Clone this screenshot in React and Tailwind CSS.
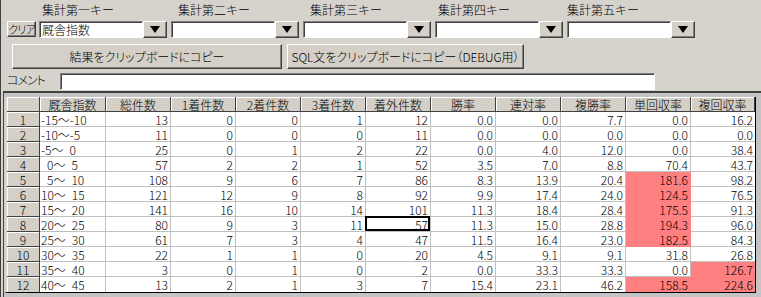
import React from "react";

const raised =
  "bg-[#d4d0c8] border border-t-white border-l-white border-b-[#404040] border-r-[#404040] shadow-[inset_-1px_-1px_0_#808080]";
const sunken =
  "bg-white border border-t-[#808080] border-l-[#808080] border-b-white border-r-white shadow-[inset_1px_1px_0_#404040]";

const headers = ["", "厩舎指数", "総件数", "1着件数", "2着件数", "3着件数", "着外件数", "勝率", "連対率", "複勝率", "単回収率", "複回収率"];

const S = "\u2002";
const rows = [
  ["-15～-10", 13, 0, 0, 1, 12, "0.0", "0.0", "7.7", "0.0", "16.2"],
  ["-10～-5", 11, 0, 0, 0, 11, "0.0", "0.0", "0.0", "0.0", "0.0"],
  [`-5～${S}0`, 25, 0, 1, 2, 22, "0.0", "4.0", "12.0", "0.0", "38.4"],
  [`${S}0～${S}5`, 57, 2, 2, 1, 52, "3.5", "7.0", "8.8", "70.4", "43.7"],
  [`${S}5～${S}10`, 108, 9, 6, 7, 86, "8.3", "13.9", "20.4", "181.6", "98.2"],
  [`10～${S}15`, 121, 12, 9, 8, 92, "9.9", "17.4", "24.0", "124.5", "76.5"],
  [`15～${S}20`, 141, 16, 10, 14, 101, "11.3", "18.4", "28.4", "175.5", "91.3"],
  [`20～${S}25`, 80, 9, 3, 11, 57, "11.3", "15.0", "28.8", "194.3", "96.0"],
  [`25～${S}30`, 61, 7, 3, 4, 47, "11.5", "16.4", "23.0", "182.5", "84.3"],
  [`30～${S}35`, 22, 1, 1, 0, 20, "4.5", "9.1", "9.1", "31.8", "26.8"],
  [`35～${S}40`, 3, 0, 1, 0, 2, "0.0", "33.3", "33.3", "0.0", "126.7"],
  [`40～${S}45`, 13, 2, 1, 3, 7, "15.4", "23.1", "46.2", "158.5", "224.6"],
];

const pink = (r, c) => (c === 9 && ((r >= 4 && r <= 8) || r === 11)) || (c === 10 && (r === 10 || r === 11));

function Arrow() {
  return (
    <div className={`${raised} w-[24px] h-full flex items-center justify-center`}>
      <svg width="10" height="7" viewBox="0 0 10 7">
        <polygon points="0,0 10,0 5,7" fill="#000" />
      </svg>
    </div>
  );
}

function Combo({ value }) {
  return (
    <div className="flex h-full w-[128px]">
      <div className={`${sunken} w-[104px] h-full pl-[2px] text-[12px] leading-[13px] flex items-center`}>{value}</div>
      <Arrow />
    </div>
  );
}

export default function App() {
  return (
    <div className="w-[761px] h-[297px] overflow-hidden bg-[#d6d3cd] border-l border-[#404040] flex flex-col text-black font-['Noto_Sans_CJK_JP',sans-serif] font-light">
      {/* labels */}
      <div className="h-[21px] flex items-start pt-[2px] text-[12px] leading-[15px] whitespace-nowrap">
        <span className="ml-[41px] w-[72px]">集計第一キー</span>
        <span className="ml-[64px] w-[72px]">集計第二キー</span>
        <span className="ml-[60px] w-[72px]">集計第三キー</span>
        <span className="ml-[56px] w-[72px]">集計第四キー</span>
        <span className="ml-[57px] w-[72px]">集計第五キー</span>
      </div>
      {/* combos */}
      <div className="h-[17px] flex">
        <div className={`${raised} ml-[6px] w-[29px] h-[16px] flex items-center justify-center text-[11px] leading-[12px] [font-feature-settings:'palt'] tracking-[-1px]`}>クリア</div>
        <div className="ml-[3px] flex gap-[4px] h-full">
          <Combo value="厩舎指数" />
          <Combo value="" />
          <Combo value="" />
          <Combo value="" />
          <Combo value="" />
        </div>
      </div>
      {/* buttons */}
      <div className="mt-[6px] h-[25px] flex text-[12px] leading-[15px] [font-feature-settings:'palt']">
        <div className={`${raised} ml-[11px] w-[270px] h-full flex items-center justify-center`}>結果をクリップボードにコピー</div>
        <div className={`${raised} ml-[5px] w-[237px] h-full flex items-center justify-center`}>SQL文をクリップボードにコピー（DEBUG用）</div>
      </div>
      {/* comment */}
      <div className="mt-[4px] h-[18px] flex items-start">
        <span className="ml-[6px] w-[53px] text-[12px] leading-[13px] [font-feature-settings:'palt'] tracking-[-1px]">コメント</span>
        <div className={`${sunken} w-[595px] h-[17px]`} />
      </div>
      {/* grid */}
      <div className="flex-1 ml-[2px] bg-[#c4c4c4] border-t-2 border-t-[#404040] border-l border-l-[#404040]">
        <div className="inline-grid grid-cols-[33px_66px_repeat(9,65px)_64px] border-l-[3px] border-l-[#d6d3cd] border-r border-r-black border-b border-b-black text-[12px] leading-[13px] bg-white">
          {headers.map((h, i) => (
            <div
              key={"h" + i}
              className="h-[15px] bg-[#d4d0c8] border-b border-b-[#404040] border-r border-r-[#404040] last:border-r-0 shadow-[inset_1px_1px_0_#fff] flex items-center justify-center whitespace-nowrap"
            >
              {h}
            </div>
          ))}
          {rows.map((row, r) => (
            <React.Fragment key={r}>
              <div
                className={`h-[15px] bg-[#d4d0c8] border-r border-r-[#404040] ${r < 11 ? "border-b border-b-[#404040]" : ""} shadow-[inset_1px_1px_0_#fff] flex items-center justify-center`}
              >
                {r + 1}
              </div>
              {row.map((v, c) => {
                const p = pink(r, c);
                const bc = p ? "border-[#ff8080]" : "border-[#c0c0c0]";
                const right = c < 10 ? "border-r" : "";
                const bottom = r < 11 ? "border-b" : "";
                const sel = r === 7 && c === 5;
                return (
                  <div
                    key={c}
                    className={`relative h-[15px] ${right} ${bottom} ${bc} ${p ? "bg-[#ff8080]" : "bg-white"} flex items-center whitespace-pre ${c === 0 ? "justify-start pl-[1px]" : "justify-end pr-[2px]"}`}
                  >
                    {v}
                    {sel && <div className="absolute -left-px -top-px right-0 bottom-0 border-2 border-black" />}
                  </div>
                );
              })}
            </React.Fragment>
          ))}
        </div>
      </div>
    </div>
  );
}
